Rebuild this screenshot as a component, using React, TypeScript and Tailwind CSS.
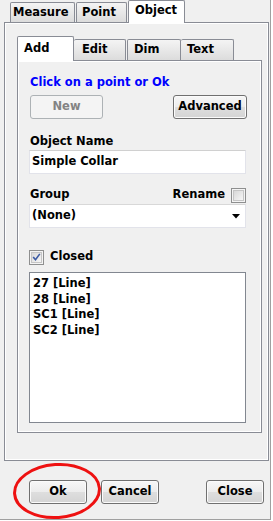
import React from "react";

const font = "font-['DejaVu_Sans',sans-serif] font-bold text-[11.5px]";

function Button({ label, className }: { label: string; className: string }) {
  return (
    <div
      className={
        "h-[24px] rounded-[3px] border border-[#707070] bg-[linear-gradient(#f7f7f7_0%,#ececec_50%,#dedede_51%,#d4d4d4_100%)] shadow-[inset_0_0_0_1px_#fbfbfb] flex items-center justify-center text-black " +
        className
      }
    >
      {label}
    </div>
  );
}

function CheckBox({ checked }: { checked?: boolean }) {
  return (
    <div className="w-[15px] h-[15px] border border-[#8e8f8f] bg-[#f4f4f4] flex items-center justify-center">
      <div className="w-[11px] h-[11px] border border-[#c5c5c5] bg-[linear-gradient(135deg,#d8d8d8,#f6f6f6)] flex items-center justify-center">
        {checked && (
          <svg width="11" height="11" viewBox="0 0 11 11">
            <path d="M2 5.5 L4.3 8.3 L9 1.8" fill="none" stroke="#3b5aa3" strokeWidth="1.9" strokeLinecap="square" />
          </svg>
        )}
      </div>
    </div>
  );
}

export default function App() {
  return (
    <div className="w-[273px] h-[521px] bg-white relative overflow-hidden">
      <div className={"w-[271px] h-[520px] bg-[#f0f0f0] border-r border-b border-[#a0a0a0] flex flex-col " + font}>
        {/* outer tab row */}
        <div className="h-[22px] flex items-end pl-[10px]">
          <div className="w-[65px] h-[20px] border border-b-0 border-[#898c95] rounded-t-[2px] bg-[linear-gradient(#f4f4f4,#dcdcdc)] flex items-center pl-[2px]">
            Measure
          </div>
          <div className="ml-[1px] w-[51px] h-[20px] border border-b-0 border-[#898c95] rounded-t-[2px] bg-[linear-gradient(#f4f4f4,#dcdcdc)] flex items-center pl-[5px]">
            Point
          </div>
          <div className="ml-[1px] w-[57px] h-[23px] -mb-[1px] relative z-10 border border-b-0 border-[#898c95] rounded-t-[2px] bg-white flex items-center pl-[6px] pb-[2px]">
            Object
          </div>
        </div>
        {/* outer panel */}
        <div className="ml-[4px] w-[265px] h-[439px] border border-[#898c95] shadow-[inset_0_0_0_1px_#ffffff] bg-[#f0f0f0] pt-[13px] pl-[12px] flex flex-col">
          {/* inner tab row */}
          <div className="h-[24px] flex items-end">
            <div className="w-[57px] h-[25px] -mb-[1px] relative z-10 border border-b-0 border-[#898c95] rounded-t-[2px] bg-white flex items-center pl-[6px] pb-[1px]">
              Add
            </div>
            <div className="w-[52px] h-[21px] border border-b-0 border-l-0 border-[#898c95] rounded-t-[2px] bg-[linear-gradient(#f4f4f4,#dcdcdc)] flex items-center pl-[8px]">
              Edit
            </div>
            <div className="ml-[1px] w-[54px] h-[21px] border border-b-0 border-[#898c95] rounded-t-[2px] bg-[linear-gradient(#f4f4f4,#dcdcdc)] flex items-center pl-[6px]">
              Dim
            </div>
            <div className="w-[53px] h-[21px] border border-b-0 border-l-0 border-[#898c95] rounded-t-[2px] bg-[linear-gradient(#f4f4f4,#dcdcdc)] flex items-center pl-[6px]">
              Text
            </div>
          </div>
          {/* inner panel */}
          <div className="w-[245px] h-[373px] border border-[#898c95] shadow-[inset_0_0_0_1px_#ffffff] bg-[#f0f0f0] pl-[11px] pr-[15px] flex flex-col">
            <div className="mt-[14px] h-[14px] leading-[14px] text-[#0000ff] pl-[1px]">Click on a point or Ok</div>
            <div className="mt-[6px] flex justify-between">
              <div className="ml-[1px] w-[73px] h-[24px] rounded-[3px] border border-[#adb2b5] bg-[#f4f4f4] flex items-center justify-center text-[#838383]">
                New
              </div>
              <Button label="Advanced" className="w-[74px] -mr-[1px]" />
            </div>
            <div className="mt-[15px] h-[14px] leading-[14px] pl-[1px]">Object Name</div>
            <div className="mt-[2px] h-[24px] bg-white border border-[#e2e3ea] border-t-[#d0d0d0] flex items-center pl-[2px]">
              Simple Collar
            </div>
            <div className="mt-[13px] h-[16px] flex items-center">
              <span className="pl-[1px]">Group</span>
              <span className="ml-auto mr-[6px]">Rename</span>
              <CheckBox />
            </div>
            <div className="mt-[1px] h-[24px] bg-white border border-[#e2e3ea] border-t-[#d8d8d8] flex items-center pl-[2px] pr-[5px]">
              <span>(None)</span>
              <svg className="ml-auto" width="8" height="5" viewBox="0 0 8 5">
                <path d="M0 0 H8 L4 4.5 Z" fill="#000" />
              </svg>
            </div>
            <div className="mt-[21px] h-[16px] flex items-center">
              <CheckBox checked />
              <span className="ml-[6px]">Closed</span>
            </div>
            <div className="mt-[7px] h-[151px] bg-white border border-[#828790] pt-[3px] pl-[3px] leading-[15.5px]">
              <div>27 [Line]</div>
              <div>28 [Line]</div>
              <div>SC1 [Line]</div>
              <div>SC2 [Line]</div>
            </div>
          </div>
        </div>
        {/* footer */}
        <div className="flex pt-[19px] pl-[29px] pr-[6px]">
          <Button label="Ok" className="w-[58px]" />
          <Button label="Cancel" className="ml-[14px] w-[58px]" />
          <Button label="Close" className="ml-auto w-[58px]" />
        </div>
      </div>
      <svg className="absolute left-0 top-0 pointer-events-none" width="273" height="521">
        <ellipse cx="57" cy="491" rx="42.5" ry="26.5" fill="none" stroke="#ee1111" strokeWidth="3" transform="rotate(-4 57 491)" />
      </svg>
    </div>
  );
}
